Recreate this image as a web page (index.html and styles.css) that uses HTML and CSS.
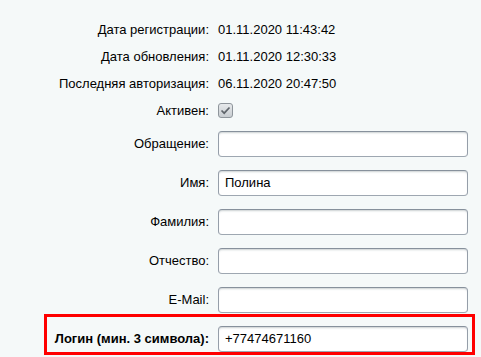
FILE: index.html
```html
<!DOCTYPE html>
<html lang="ru">
<head>
  <meta charset="UTF-8">
  <title>Пользователь</title>
  <link rel="stylesheet" href="styles.css">
</head>
<body>
  <div class="edit-form">
    <div class="field-row text-row">
      <div class="field-label">Дата регистрации:</div>
      <div class="field-value">01.11.2020 11:43:42</div>
    </div>
    <div class="field-row text-row">
      <div class="field-label">Дата обновления:</div>
      <div class="field-value">01.11.2020 12:30:33</div>
    </div>
    <div class="field-row text-row">
      <div class="field-label">Последняя авторизация:</div>
      <div class="field-value">06.11.2020 20:47:50</div>
    </div>
    <div class="field-row text-row">
      <div class="field-label">Активен:</div>
      <div class="field-value">
        <span class="check-box">
          <svg width="11" height="9" viewBox="0 0 11 9"><path d="M1.5 4.5 L4.2 7.2 L9.5 1.5" fill="none" stroke="#5f656b" stroke-width="1.7"/></svg>
        </span>
      </div>
    </div>
    <div class="field-row input-row">
      <div class="field-label">Обращение:</div>
      <div class="field-value"><input class="text-input" type="text" value=""></div>
    </div>
    <div class="field-row input-row">
      <div class="field-label">Имя:</div>
      <div class="field-value"><input class="text-input" type="text" value="Полина"></div>
    </div>
    <div class="field-row input-row">
      <div class="field-label">Фамилия:</div>
      <div class="field-value"><input class="text-input" type="text" value=""></div>
    </div>
    <div class="field-row input-row">
      <div class="field-label">Отчество:</div>
      <div class="field-value"><input class="text-input" type="text" value=""></div>
    </div>
    <div class="field-row input-row">
      <div class="field-label">E-Mail:</div>
      <div class="field-value"><input class="text-input" type="text" value=""></div>
    </div>
    <div class="field-row input-row marked">
      <div class="field-label bold">Логин (мин. 3 символа):</div>
      <div class="field-value"><input class="text-input" type="text" value="+77474671160"></div>
    </div>
  </div>
</body>
</html>
```

FILE: styles.css
```css
body {
  margin: 0;
  background-color: #f5f9f9;
  font-family: "Liberation Sans", Arial, sans-serif;
  font-size: 13px;
  color: #000;
}

.edit-form {
  padding-top: 16px;
}

.field-row {
  display: flex;
  align-items: center;
  gap: 9px;
}

.text-row {
  height: 27px;
}

.input-row {
  height: 39px;
}

.field-label {
  width: 209px;
  flex-shrink: 0;
  text-align: right;
}

.field-label.bold {
  font-weight: bold;
}

.field-value {
  display: flex;
  align-items: center;
}

.check-box {
  width: 13px;
  height: 13px;
  border: 1px solid #8e959b;
  border-radius: 3px;
  background: linear-gradient(#e6e9eb, #c8cdd1);
  display: flex;
  justify-content: center;
  align-items: center;
}

.text-input {
  box-sizing: border-box;
  width: 250px;
  height: 26px;
  margin: 0;
  padding: 0 6px;
  border: 1px solid;
  border-color: #87919c #959ea9 #9ea7b1 #959ea9;
  border-radius: 4px;
  background: #fff;
  box-shadow: inset 0 2px 2px -1px rgba(180, 188, 191, 0.7);
  font-family: "Liberation Sans", Arial, sans-serif;
  font-size: 13px;
  color: #000;
  outline: none;
}

/* red frame drawn over the login row */
.marked {
  position: relative;
}

.marked::before {
  content: "";
  position: absolute;
  left: 44px;
  top: -5px;
  width: 431px;
  height: 41px;
  box-sizing: border-box;
  border: 3px solid #ff0000;
  pointer-events: none;
}
```
